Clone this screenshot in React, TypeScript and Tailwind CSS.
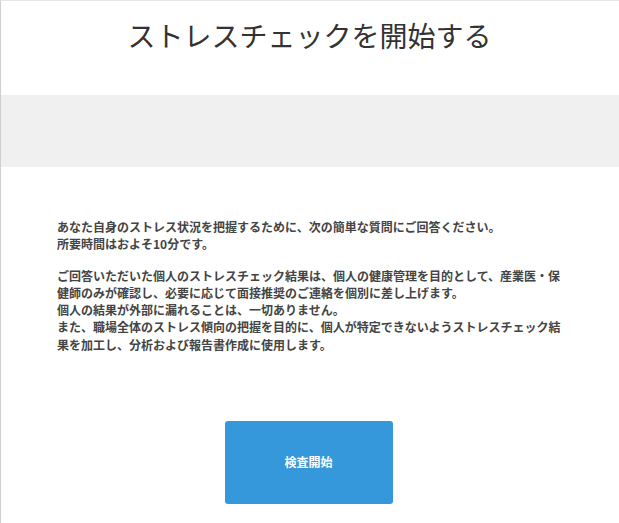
export default function App() {
  return (
    <div
      className="min-h-[523px] w-[619px] border-l border-t border-l-[#cfcfcf] border-t-[#e6e6e6] bg-white"
      style={{ fontFamily: '"Noto Sans CJK JP", "Noto Sans", sans-serif' }}
    >
      <div className="flex h-[94px] items-start justify-center pt-[13px] pr-[1px]">
        <h1 className="text-[28px] font-normal leading-[42px] text-[#333]">
          ストレスチェックを開始する
        </h1>
      </div>
      <div className="h-[72px] bg-[#f0f0f0]" />
      <div className="w-[510px] pl-[56px] pt-[51px] text-[12px] font-bold leading-[17.25px] text-[#444] box-content">
        <p className="mb-[14px]">
          あなた自身のストレス状況を把握するために、次の簡単な質問にご回答ください。
          <br />
          所要時間はおよそ10分です。
        </p>
        <p>
          ご回答いただいた個人のストレスチェック結果は、個人の健康管理を目的として、産業医・保健師のみが確認し、必要に応じて面接推奨のご連絡を個別に差し上げます。
          <br />
          個人の結果が外部に漏れることは、一切ありません。
          <br />
          また、職場全体のストレス傾向の把握を目的に、個人が特定できないようストレスチェック結果を加工し、分析および報告書作成に使用します。
        </p>
      </div>
      <div className="flex justify-center pt-[68px] pr-[3px]">
        <button className="flex h-[83px] w-[168px] items-center justify-center rounded-[3px] bg-[#3498db] text-[12px] font-bold text-white">
          検査開始
        </button>
      </div>
    </div>
  );
}
